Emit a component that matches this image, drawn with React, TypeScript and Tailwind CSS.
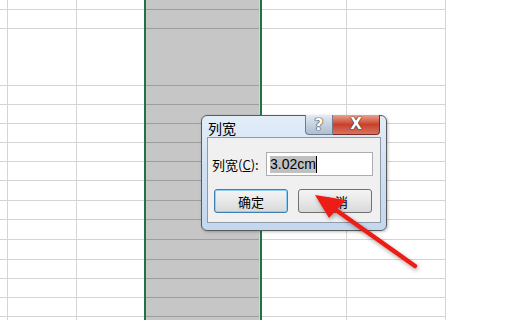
import React from "react";

const rowHeights = [10, 19, 57, 19, 19, 19, 19, 19, 20, 19, 20, 20, 19, 19, 19, 20];

function Row({ h }: { h: number }) {
  return (
    <div className="flex shrink-0" style={{ height: h }}>
      <div className="w-[8px] border-r border-b border-[#d4d4d4]" />
      <div className="w-[69px] border-r border-b border-[#d4d4d4]" />
      <div className="w-[67px] border-b border-[#d4d4d4]" />
      <div className="w-[2px] bg-[#217346]" />
      <div className="w-[113px] bg-[#c6c6c6] border-b border-[#9e9e9e]" />
      <div className="w-[1px] bg-[#d4d4d4]" />
      <div className="w-[2px] bg-[#217346]" />
      <div className="w-[85px] border-r border-b border-[#d4d4d4]" />
      <div className="w-[99px] border-r border-b border-[#d4d4d4]" />
      <div className="flex-1" />
    </div>
  );
}

export default function App() {
  const cjk = { fontFamily: '"Noto Sans CJK SC", "Noto Sans", sans-serif' };
  return (
    <div className="relative w-[530px] h-[320px] overflow-hidden bg-white">
      <div className="flex flex-col">
        {rowHeights.map((h, i) => (
          <Row key={i} h={h} />
        ))}
      </div>

      {/* Dialog */}
      <div
        className="absolute left-[201px] top-[115px] w-[186px] h-[116px] rounded-[6px] border border-[#5a5a5a] bg-gradient-to-b from-[#e2edf8] via-[#cfe0f2] to-[#c3d7ee] shadow-[1px_1px_3px_rgba(0,0,0,0.25)] flex flex-col"
        style={cjk}
      >
        <div className="relative h-[21px] flex items-center pl-[6px]">
          <span className="text-[14px] leading-none text-black mt-[3px]">列宽</span>
          <div className="absolute right-[6px] top-[-1px] flex h-[20px]">
            <div className="w-[28px] h-full rounded-bl-[4px] border border-[#6d7c8e] border-t-0 bg-gradient-to-b from-[#e4ebf3] via-[#c4d2e1] to-[#aebfd2] flex items-center justify-center">
              <span
                className="text-[16px] font-bold text-white leading-none [text-shadow:0_0_1px_#333,0_0_1px_#333,0_0_1px_#333]"
                style={{ fontFamily: '"DejaVu Sans", sans-serif' }}
              >
                ?
              </span>
            </div>
            <div className="w-[47px] h-full rounded-br-[4px] border border-[#7a2a20] border-t-0 border-l-0 bg-gradient-to-b from-[#e9a08f] via-[#c8402a] to-[#d7735e] flex items-center justify-center">
              <span
                className="text-[15px] font-bold text-white leading-none [text-shadow:0_0_1px_#333,0_0_1px_#333,0_0_1px_#333]"
                style={{ fontFamily: '"DejaVu Sans", sans-serif' }}
              >
                X
              </span>
            </div>
          </div>
        </div>
        <div className="mx-[5px] h-[86px] border border-[#8e9aa8] bg-[#f0f0f0] flex flex-col">
          <div className="flex items-center mt-[14px] pl-[4px]">
            <span className="text-[13px] leading-none text-black w-[54px]">
              列宽(<span className="underline">C</span>):
            </span>
            <div className="w-[107px] h-[24px] border border-[#abadb3] bg-white flex items-center pl-[3px]">
              <span
                className="bg-[#c0c0c0] text-[14px] leading-[17px] text-black"
                style={{ fontFamily: '"Liberation Sans", Arial, sans-serif' }}
              >
                3.02cm
              </span>
              <span className="w-[1px] h-[17px] bg-black" />
            </div>
          </div>
          <div className="flex mt-[13px] pl-[6px] gap-[10px]">
            <div className="w-[74px] h-[24px] rounded-[3px] border border-[#3c7fb1] shadow-[inset_0_0_0_1px_#8fd0f4] bg-gradient-to-b from-[#f4f4f4] via-[#e8e8e8] to-[#d8d8d8] flex items-center justify-center">
              <span className="text-[13px] leading-none text-black">确定</span>
            </div>
            <div className="w-[74px] h-[24px] rounded-[3px] border border-[#707070] bg-gradient-to-b from-[#f4f4f4] via-[#e8e8e8] to-[#d8d8d8] flex items-center justify-center">
              <span className="text-[13px] leading-none text-black">取消</span>
            </div>
          </div>
        </div>
      </div>

      {/* Arrow */}
      <svg className="absolute left-0 top-0" width="530" height="320" viewBox="0 0 530 320">
        <defs>
          <filter id="sh" x="-20%" y="-20%" width="140%" height="140%">
            <feGaussianBlur in="SourceAlpha" stdDeviation="2" />
            <feOffset dx="1" dy="2" result="b" />
            <feComponentTransfer>
              <feFuncA type="linear" slope="0.35" />
            </feComponentTransfer>
            <feMerge>
              <feMergeNode />
              <feMergeNode in="SourceGraphic" />
            </feMerge>
          </filter>
        </defs>
        <g filter="url(#sh)">
          <line x1="415" y1="266" x2="336" y2="210" stroke="#ec1c12" strokeWidth="4.5" strokeLinecap="round" />
          <polygon points="315,195 346,200 329,218" fill="#ec1c12" />
        </g>
      </svg>
    </div>
  );
}
